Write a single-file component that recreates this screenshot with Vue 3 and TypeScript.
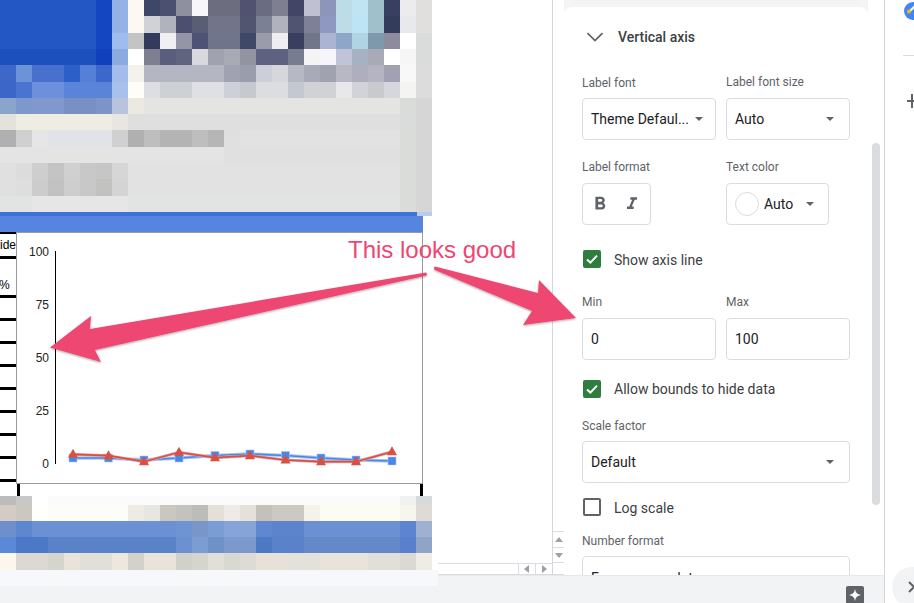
<script setup lang="ts">
type Run = [string, number];
const expand = (runs: Run[]): string[] =>
  runs.flatMap(([c, n]) => Array<string>(n).fill(c));

const topMosaic: string[] = [
  [['#2358c4',6],['#1346c0',1],['#95b2e6',1],['#fdf9f2',1],['#3f4768',1],['#4c5070',1],['#8e90a0',1],['#f7f7fa',1],['#6c6e80',2],['#50526f',1],['#6a6c80',1],['#7e8092',1],['#424566',1],['#bfc0d2',1],['#8d95bb',1],['#bcdce8',1],['#c0e4f2',1],['#a0c0cc',1],['#383f60',1],['#ececee',1],['#e0dfde',1]],
  [['#2358c4',6],['#1346c0',1],['#95b2e6',1],['#fdf9f2',1],['#d0d2d8',1],['#b0b2be',1],['#4c5070',1],['#5a5e74',1],['#72758a',2],['#505670',1],['#7c8094',1],['#b0b2be',1],['#505470',1],['#7e8098',1],['#8f98c0',1],['#bcdce8',1],['#bce4f4',1],['#a0c0cc',1],['#343c5c',1],['#e8e9ec',1],['#e0dfde',1]],
  [['#2358c4',6],['#1346c0',1],['#9fbcee',1],['#c4c4c4',1],['#333a5c',1],['#f0f0f4',1],['#9496a8',1],['#4e5274',1],['#70748a',2],['#404868',1],['#9a9cab',1],['#eeeef2',1],['#3a3f60',1],['#72768a',1],['#acb4d4',1],['#8ea6c8',1],['#b0d4e4',1],['#7e98ac',1],['#8c8c9c',1],['#ffffff',1],['#dadbdb',1]],
  [['#1c50bc',6],['#1040bc',1],['#8aaae0',1],['#ffffff',1],['#7e8092',1],['#5a5e7c',1],['#60647e',1],['#d8d9de',1],['#a0a2b0',1],['#a8aab6',1],['#92949f',1],['#5e6280',2],['#787c90',1],['#f4f4f5',1],['#f6f6fa',1],['#c0c4d8',1],['#a6b2c2',1],['#a8aab6',1],['#ffffff',1],['#f6f6f6',1],['#dadbdb',1]],
  [['#3e68c8',1],['#6c92d8',1],['#4870cc',2],['#2c60c8',1],['#5480d8',1],['#3c68cc',1],['#a4bcec',1],['#f4f2ec',1],['#b4b6c2',5],['#a0a2b2',1],['#9a9eac',1],['#cccfd8',1],['#d6d7da',1],['#b6b8c4',1],['#a8aab8',1],['#a0a2b0',1],['#b8b8c4',1],['#aeaebc',1],['#b4b4c2',1],['#a0a2b2',1],['#f8f8f8',1],['#dcdcdc',1]],
  [['#3c66c8',1],['#4a74d0',1],['#6c90dc',2],['#5a84d8',3],['#a8c0ec',1],['#fefdf8',1],['#dcdee2',1],['#cdd0d4',2],['#dfe0e4',2],['#cdd0d6',1],['#c6c9ce',1],['#dcdde0',2],['#c4c8d0',1],['#d0d2d6',2],['#e8e8ea',1],['#d2d3d8',1],['#c8cace',1],['#d6d7dc',1],['#f4f4f2',1],['#dcdcdc',1]],
  [['#8aa4cc',1],['#7c98cc',1],['#8098cc',2],['#7890c4',2],['#7c94c8',1],['#b8c4dc',1],['#ebe9e2',1],['#e4e4e2',16],['#dadcda',1],['#d6d6d6',1]],
  [['#e4e2dc',1],['#efece4',6],['#e8e6e0',1],['#dedfde',17],['#d9dcda',1],['#d6d6d6',1]],
  [['#b0b0b0',1],['#d0d0d0',1],['#e6e6e6',1],['#e2e3e6',4],['#d0d0d0',1],['#b0b0b0',1],['#bebebe',1],['#b4b4b4',2],['#bebebe',1],['#b6b6b6',1],['#e0e0e0',1],['#e2e2e2',10],['#dadcda',1],['#d6d6d6',1]],
  [['#e4e4e4',14],['#e0e0e0',11],['#dadcda',1],['#d6d6d6',1]],
  [['#e0e0e0',1],['#dcdcdc',1],['#cecece',1],['#c4c4c4',1],['#d0d0d0',1],['#c8c8c8',1],['#c6c6c6',1],['#d6d6d6',1],['#e2e2e2',17],['#dadcda',1],['#d6d6d6',1]],
  [['#e0e0e0',1],['#dedede',1],['#cccccc',1],['#c2c2c2',1],['#cecece',1],['#c8c8c8',1],['#c2c2c0',1],['#d4d4d4',1],['#e2e2e2',17],['#dadcda',1],['#d6d6d6',1]],
  [['#e2e3e3',2],['#e6e6e6',6],['#e2e3e3',17],['#dadcda',1],['#d6d6d6',1]],
].flatMap((r) => expand(r as Run[]));

const bottomMosaic: string[][] = ([
  [['#bcbcbc',1],['#c8c8c8',1],['#ffffff',1],['#fbfbfb',22],['#f0f2f2',1],['#d6dada',1]],
  [['#d4ccc4',1],['#ccc8c0',1],['#fffffc',1],['#fdfcf6',4],['#fcfcf8',1],['#eeeae4',1],['#e8e6e0',1],['#cac6c0',1],['#c4c2bc',1],['#bcbcb8',1],['#e4e0d8',1],['#eeeae6',1],['#e4e0da',1],['#c4c0ba',1],['#ccc8c2',2],['#f4f2ea',1],['#fdfcf4',5],['#f6f5ee',1],['#dedad6',1]],
  [['#6e8fcc',1],['#5f87cf',1],['#6b90d4',9],['#6f94d4',1],['#7a96c8',1],['#7a9ed4',1],['#86a4d8',2],['#6088d0',1],['#5c84cc',2],['#6c90d4',6],['#5c84d0',1],['#a0b0d0',1]],
  [['#5c88d8',1],['#4c78c8',2],['#5a82c8',8],['#6c90d0',1],['#7c9cd4',1],['#7090c8',1],['#7c98cc',2],['#4c78c4',1],['#5a82cc',2],['#6488c8',6],['#5880cc',1],['#90a4c8',1]],
  [['#fbf6ee',1],['#dcd8d2',2],['#d6d4ce',1],['#e8e4dc',1],['#e2ded8',2],['#ece8de',1],['#d4d0ca',1],['#e8e4dc',2],['#d2d0ca',1],['#d6d4ce',1],['#e2dfd8',1],['#dad8d2',1],['#dedbd4',1],['#e6e2da',2],['#e4e0da',2],['#e8e4dc',3],['#e2ded8',2],['#dcd8d2',1],['#eeece4',1]],
  [['#f7f8fa',28]],
] as Run[][]).map(expand);

const ticks = ['ide', '%', '', '', '', '', '', '', '', ''];
const yLabels = [
  { text: '100', y: 256 },
  { text: '75', y: 309 },
  { text: '50', y: 362 },
  { text: '25', y: 415 },
  { text: '0', y: 468 },
];
const xs = [73, 108.5, 144, 179, 215, 250, 285.5, 321, 356, 392];
const blueYs = [458, 458, 460, 458, 455.5, 454, 455.5, 458, 460, 461];
const redYs = [454.3, 455.7, 461.7, 452.3, 457.7, 455.7, 460, 461.7, 461.7, 451.7];
const toLine = (ys: number[]) => xs.map((x, i) => `${x},${ys[i]}`).join(' ');
const bluePoints = toLine(blueYs);
const redPoints = toLine(redYs);
const triangle = (x: number, y: number) =>
  `${x - 5},${y + 3.5} ${x + 5},${y + 3.5} ${x},${y - 5.5}`;
</script>

<template>
  <div class="app">
    <section class="sheet">
      <div class="grid-area">
        <div class="mosaic-top">
          <i v-for="(c, i) in topMosaic" :key="i" :style="{ background: c }"></i>
        </div>
        <div class="band">
          <div class="band-strip"><span class="strip-dark"></span><span class="strip-light"></span></div>
        </div>
        <div class="chart-row">
          <div class="tick-col">
            <div v-for="(t, i) in ticks" :key="i" class="tick" :class="'tick-' + i">{{ t }}</div>
          </div>
          <div class="chart">
            <svg class="chart-svg" width="405" height="250" viewBox="17 233 405 250">
              <text v-for="l in yLabels" :key="l.text" :x="49" :y="l.y" text-anchor="end" class="axis-label">{{ l.text }}</text>
              <line x1="55.5" y1="251" x2="55.5" y2="464" stroke="#000" stroke-width="1" />
              <polyline :points="bluePoints" fill="none" stroke="#a9c6f5" stroke-width="3.4" />
              <polyline :points="bluePoints" fill="none" stroke="#4a86e8" stroke-width="1.6" />
              <rect v-for="(x, i) in xs" :key="'b' + i" :x="x - 4" :y="blueYs[i] - 4" width="8" height="8" fill="#4a86e8" stroke="#a9c6f5" stroke-width="0.6" />
              <polyline :points="redPoints" fill="none" stroke="#d8a8b0" stroke-width="3" />
              <polyline :points="redPoints" fill="none" stroke="#d9503f" stroke-width="1.7" />
              <polygon v-for="(x, i) in xs" :key="'r' + i" :points="triangle(x, redYs[i])" fill="#d9503f" />
            </svg>
          </div>
        </div>
        <div class="legs"><span></span><span></span></div>
        <div class="mosaic-bottom">
          <template v-for="(row, r) in bottomMosaic" :key="r">
            <i v-for="(c, i) in row" :key="i" :style="{ background: c }"></i>
            <b v-if="row.length < 28" class="spacer"></b>
          </template>
        </div>
        <div class="h-scroll">
          <span class="h-btn"><svg width="6" height="8" viewBox="0 0 6 8"><path d="M5 0v8L0 4z" fill="#9aa0a6" /></svg></span>
          <span class="h-btn"><svg width="6" height="8" viewBox="0 0 6 8"><path d="M1 0v8l5-4z" fill="#9aa0a6" /></svg></span>
        </div>
      </div>
      <div class="v-scroll">
        <span class="v-btn"><svg width="8" height="6" viewBox="0 0 8 6"><path d="M0 5h8L4 0z" fill="#9aa0a6" /></svg></span>
        <span class="v-btn"><svg width="8" height="6" viewBox="0 0 8 6"><path d="M0 1h8L4 6z" fill="#9aa0a6" /></svg></span>
      </div>
    </section>

    <aside class="panel">
      <div class="card-back">
        <div class="card">
          <header class="card-head">
            <svg width="18" height="10" viewBox="0 0 18 10"><path d="M1.5 1.2 9 8.6l7.5-7.4" fill="none" stroke="#5f6368" stroke-width="1.7" /></svg>
            <h3>Vertical axis</h3>
          </header>

          <div class="row">
            <label class="field"><span class="lbl nudge">Label font</span>
              <div class="ctl tight"><span class="val">Theme Defaul...</span><span class="caret"></span></div>
            </label>
            <label class="field"><span class="lbl">Label font size</span>
              <div class="ctl"><span class="val">Auto</span><span class="caret"></span></div>
            </label>
          </div>

          <div class="row gap-19">
            <div class="field"><span class="lbl">Label format</span>
              <div class="ctl format">
                <svg width="22" height="22" viewBox="0 0 24 24"><path fill="#5f6368" d="M15.6 10.79c.97-.67 1.65-1.77 1.65-2.79 0-2.26-1.75-4-4-4H7v14h7.04c2.09 0 3.71-1.7 3.71-3.79 0-1.52-.86-2.82-2.15-3.42zM10 6.5h3c.83 0 1.5.67 1.5 1.5s-.67 1.5-1.5 1.5h-3v-3zm3.5 9H10v-3h3.5c.83 0 1.5.67 1.5 1.5s-.67 1.5-1.5 1.5z" /></svg>
                <svg width="20" height="20" viewBox="0 0 24 24"><path fill="#5f6368" d="M10 4v3h2.210l-3.420 8H6v3h8v-3h-2.210l3.420-8H18V4z" /></svg>
              </div>
            </div>
            <div class="field"><span class="lbl">Text color</span>
              <div class="ctl color">
                <span class="swatch"></span><span class="val">Auto</span><span class="caret"></span>
              </div>
            </div>
          </div>

          <div class="check gap-25"><span class="box on"><svg width="18" height="18" viewBox="0 0 18 18"><path d="M4 9.4 7.4 12.6 14 5.6" fill="none" stroke="#fff" stroke-width="2" /></svg></span><span class="low-text">Show axis line</span></div>

          <div class="row gap-26">
            <div class="field"><span class="lbl">Min</span><div class="ctl"><span class="val">0</span></div></div>
            <div class="field"><span class="lbl">Max</span><div class="ctl"><span class="val">100</span></div></div>
          </div>

          <div class="check gap-20"><span class="box on"><svg width="18" height="18" viewBox="0 0 18 18"><path d="M4 9.4 7.4 12.6 14 5.6" fill="none" stroke="#fff" stroke-width="2" /></svg></span><span>Allow bounds to hide data</span></div>

          <div class="field wide gap-19"><span class="lbl nudge">Scale factor</span>
            <div class="ctl"><span class="val">Default</span><span class="caret"></span></div>
          </div>

          <div class="check gap-15"><span class="box"></span><span class="low-text">Log scale</span></div>

          <div class="field wide gap-16"><span class="lbl nudge">Number format</span>
            <div class="ctl low"><span class="val">From source data</span><span class="caret"></span></div>
          </div>
        </div>
      </div>
      <div class="thumb"></div>
    </aside>

    <nav class="rail">
      <svg class="rail-logo" width="20" height="20" viewBox="0 0 20 20">
        <circle cx="10" cy="10" r="9" fill="#4285f4" />
        <path d="M7 10 13 4" stroke="#fff" stroke-width="2" />
        <circle cx="6" cy="10.500" r="2" fill="#fbbc04" />
      </svg>
      <div class="rail-rule"></div>
      <svg class="rail-plus" width="12" height="14" viewBox="0 0 12 14"><path d="M0 7h12M5 0v14" stroke="#5f6368" stroke-width="2" /></svg>
    </nav>

    <footer class="bottom">
      <span class="spark"><svg width="12" height="12" viewBox="0 0 12 12"><path d="M6 0C6.500 3.600 8.400 5.500 12 6 8.400 6.500 6.500 8.400 6 12 5.500 8.400 3.600 6.500 0 6 3.600 5.500 5.500 3.600 6 0z" fill="#fff" /></svg></span>
    </footer>

    <button class="collapse" type="button" aria-label="Collapse">
      <svg width="8" height="12" viewBox="0 0 8 12"><path d="M1 1l5 5-5 5" fill="none" stroke="#5f6368" stroke-width="2" /></svg>
    </button>

    <div class="note">This looks good</div>
    <svg class="arrows" width="914" height="603" viewBox="0 0 914 603">
      <defs>
        <filter id="arrow-shadow" x="-5%" y="-20%" width="110%" height="140%">
          <feDropShadow dx="0" dy="1" stdDeviation="1" flood-color="#000" flood-opacity="0.35" />
        </filter>
      </defs>
      <g fill="#ed4672" filter="url(#arrow-shadow)">
        <path d="M426 272.500 Q427.500 274 426.500 275.500 L95 350 101 362 50 347.500 91 316 90 329z" />
        <path d="M435 266.500 L538 293 539 280 576 318 523 325 532 311 435 270 Q433 268 435 266.500z" />
      </g>
    </svg>
  </div>
</template>

<style scoped>
.app {
  position: relative;
  width: 914px;
  height: 603px;
  overflow: hidden;
  display: grid;
  grid-template-columns: 564px 321px 29px;
  grid-template-rows: 575px 28px;
  background: #fff;
  font-family: Roboto, "Liberation Sans", sans-serif;
  color: #202124;
}

/* sheet */
.sheet {
  grid-column: 1;
  grid-row: 1;
  display: flex;
  position: relative;
  z-index: 1;
  background: #fff;
}
.grid-area {
  position: relative;
  width: 552px;
  height: 575px;
  border-right: 1px solid #d4d6da;
  box-sizing: content-box;
  font-family: "Liberation Sans", Arial, sans-serif;
}
.mosaic-top {
  display: grid;
  grid-template-columns: repeat(27, 16px);
  grid-template-rows: repeat(13, 1fr);
  width: 432px;
  height: 212px;
}
.mosaic-top i,
.mosaic-bottom i { display: block; }
.band {
  width: 423px;
  height: 20px;
  background: #5684de;
}
.band-strip { display: flex; width: 432px; height: 4px; }
.strip-dark { width: 417px; background: #3f72d8; }
.strip-light { width: 15px; background: #b8ccf0; }

.chart-row { display: flex; height: 252px; }
.tick-col { width: 16px; overflow: hidden; border-top: 2px solid #000; box-sizing: border-box; }
.tick {
  height: 23px;
  box-sizing: border-box;
  border-bottom: 3px solid #000;
  font-size: 12px;
  line-height: 22px;
  color: #000;
  white-space: nowrap;
}
.tick-0 { height: 25px; line-height: 23px; text-align: right; }
.tick-1 { height: 39px; line-height: 52px; margin-left: -1px; }
.chart {
  width: 407px;
  height: 252px;
  box-sizing: border-box;
  border: 1px solid #9a9a9a;
  background: #fff;
}
.chart-svg { display: block; }
.axis-label { font-size: 12px; fill: #222; font-family: "Liberation Sans", Arial, sans-serif; }

.legs {
  display: flex;
  justify-content: space-between;
  width: 406px;
  height: 12px;
  padding-left: 17px;
}
.legs span { width: 3px; background: #000; }
.mosaic-bottom {
  display: grid;
  grid-template-columns: repeat(27, 16px) 6px;
  grid-template-rows: 9px 16px 16px 16px 17px 16px;
  width: 438px;
}
.spacer { display: block; }

.h-scroll {
  position: absolute;
  left: 438px;
  right: 0;
  top: 563px;
  height: 12px;
  box-sizing: border-box;
  border-top: 1px solid #dadce0;
  border-bottom: 1px solid #dadce0;
  display: flex;
  justify-content: flex-end;
}
.h-btn {
  width: 16px;
  display: flex;
  align-items: center;
  justify-content: center;
  border-left: 1px solid #dadce0;
}

.v-scroll {
  width: 11px;
  display: flex;
  flex-direction: column;
  justify-content: flex-end;
  padding-bottom: 11px;
  box-sizing: border-box;
  border-bottom: 1px solid #dadce0;
  position: relative;
}
.v-btn {
  height: 16px;
  box-sizing: border-box;
  border-top: 1px solid #dadce0;
  display: flex;
  align-items: center;
  justify-content: center;
}
.v-btn:last-child { border-bottom: 1px solid #dadce0; }

/* side panel */
.panel {
  grid-column: 2;
  grid-row: 1;
  position: relative;
  overflow: hidden;
  border-right: 1px solid #d4d6da;
  background: #fff;
}
.card-back {
  width: 304px;
  height: 100%;
  padding-top: 7px;
  box-sizing: border-box;
  background: #f3f4f6;
}
.card {
  height: 640px;
  padding: 0 18px;
  box-sizing: border-box;
  background: #fff;
  border-radius: 8px 8px 0 0;
}
.card-head {
  display: flex;
  align-items: center;
  gap: 14px;
  height: 60px;
  margin-bottom: 7px;
  padding-left: 4px;
}
.card-head svg { flex: none; }
.card-head h3 {
  margin: 0;
  font-size: 14px;
  font-weight: 500;
  color: #3c4043;
}
.row {
  display: grid;
  grid-template-columns: 134px 124px;
  column-gap: 10px;
}
.field { display: block; }
.wide { width: 268px; }
.lbl {
  display: block;
  height: 16px;
  margin-bottom: 8px;
  font-size: 12px;
  line-height: 16px;
  color: #5f6368;
}
.nudge { position: relative; top: 1px; }
.ctl {
  display: flex;
  align-items: center;
  justify-content: space-between;
  height: 42px;
  padding: 0 15px 0 8px;
  box-sizing: border-box;
  border: 1px solid #dadce0;
  border-radius: 4px;
  background: #fff;
  font-size: 14px;
  color: #202124;
}
.tight { padding-right: 12px; }
.low { padding-top: 2px; }
.val { white-space: nowrap; }
.caret {
  width: 0;
  height: 0;
  border-left: 4px solid transparent;
  border-right: 4px solid transparent;
  border-top: 4px solid #5f6368;
  margin-left: auto;
}
.format {
  width: 69px;
  padding: 0 8px 0 6px;
}
.color {
  width: 103px;
  padding: 0 14px 0 8px;
}
.swatch {
  width: 24px;
  height: 24px;
  flex: none;
  margin-right: 5px;
  box-sizing: border-box;
  border: 1px solid #dadce0;
  border-radius: 50%;
}
.check {
  display: flex;
  align-items: center;
  gap: 13px;
  height: 18px;
  padding-left: 1px;
  font-size: 14px;
  color: #3c4043;
}
.low-text { position: relative; top: 1px; }
.box {
  width: 18px;
  height: 18px;
  flex: none;
  box-sizing: border-box;
  border: 2px solid #5f6368;
  border-radius: 2px;
}
.box.on {
  border: 0;
  background: #2e7d3e;
}
.box svg { display: block; }
.gap-15 { margin-top: 15px; }
.gap-16 { margin-top: 16px; }
.gap-19 { margin-top: 19px; }
.gap-20 { margin-top: 20px; }
.gap-25 { margin-top: 25px; }
.gap-26 { margin-top: 26px; }
.thumb {
  position: absolute;
  left: 308px;
  top: 143px;
  width: 8px;
  height: 362px;
  border-radius: 4px;
  background: #dadce0;
}

/* rail */
.rail {
  grid-column: 3;
  grid-row: 1 / 3;
  display: flex;
  flex-direction: column;
  align-items: flex-start;
  overflow: hidden;
  background: #fff;
}
.rail-logo { flex: none; margin: 1px 0 0 18px; }
.rail-rule {
  flex: none;
  width: 11px;
  height: 1px;
  margin: 34px 0 0 18px;
  background: #dadce0;
}
.rail-plus { flex: none; margin: 38px 0 0 22px; }

/* bottom bar */
.bottom {
  grid-column: 1 / 3;
  grid-row: 2;
  display: flex;
  justify-content: flex-end;
  align-items: flex-start;
  padding: 10px 20px 0 0;
  box-sizing: border-box;
  background: #f1f3f4;
  border-right: 1px solid #d4d6da;
  border-top: 1px solid #e6e8ea;
}
.spark {
  display: flex;
  align-items: center;
  justify-content: center;
  width: 18px;
  height: 18px;
  border-radius: 2px;
  background: #5f6368;
}
.collapse {
  position: absolute;
  left: 892px;
  top: 567px;
  width: 40px;
  height: 40px;
  padding: 0 0 0 16px;
  box-sizing: border-box;
  border: 0;
  border-radius: 50%;
  background: #f1f3f4;
  display: flex;
  align-items: center;
  justify-content: flex-start;
}

/* annotation overlay */
.note {
  position: absolute;
  z-index: 3;
  left: 348px;
  top: 236px;
  font-family: "Liberation Sans", Arial, sans-serif;
  font-size: 24px;
  line-height: 28px;
  color: #ee4672;
  white-space: nowrap;
}
.arrows {
  position: absolute;
  z-index: 2;
  left: 0;
  top: 0;
  pointer-events: none;
}
</style>
